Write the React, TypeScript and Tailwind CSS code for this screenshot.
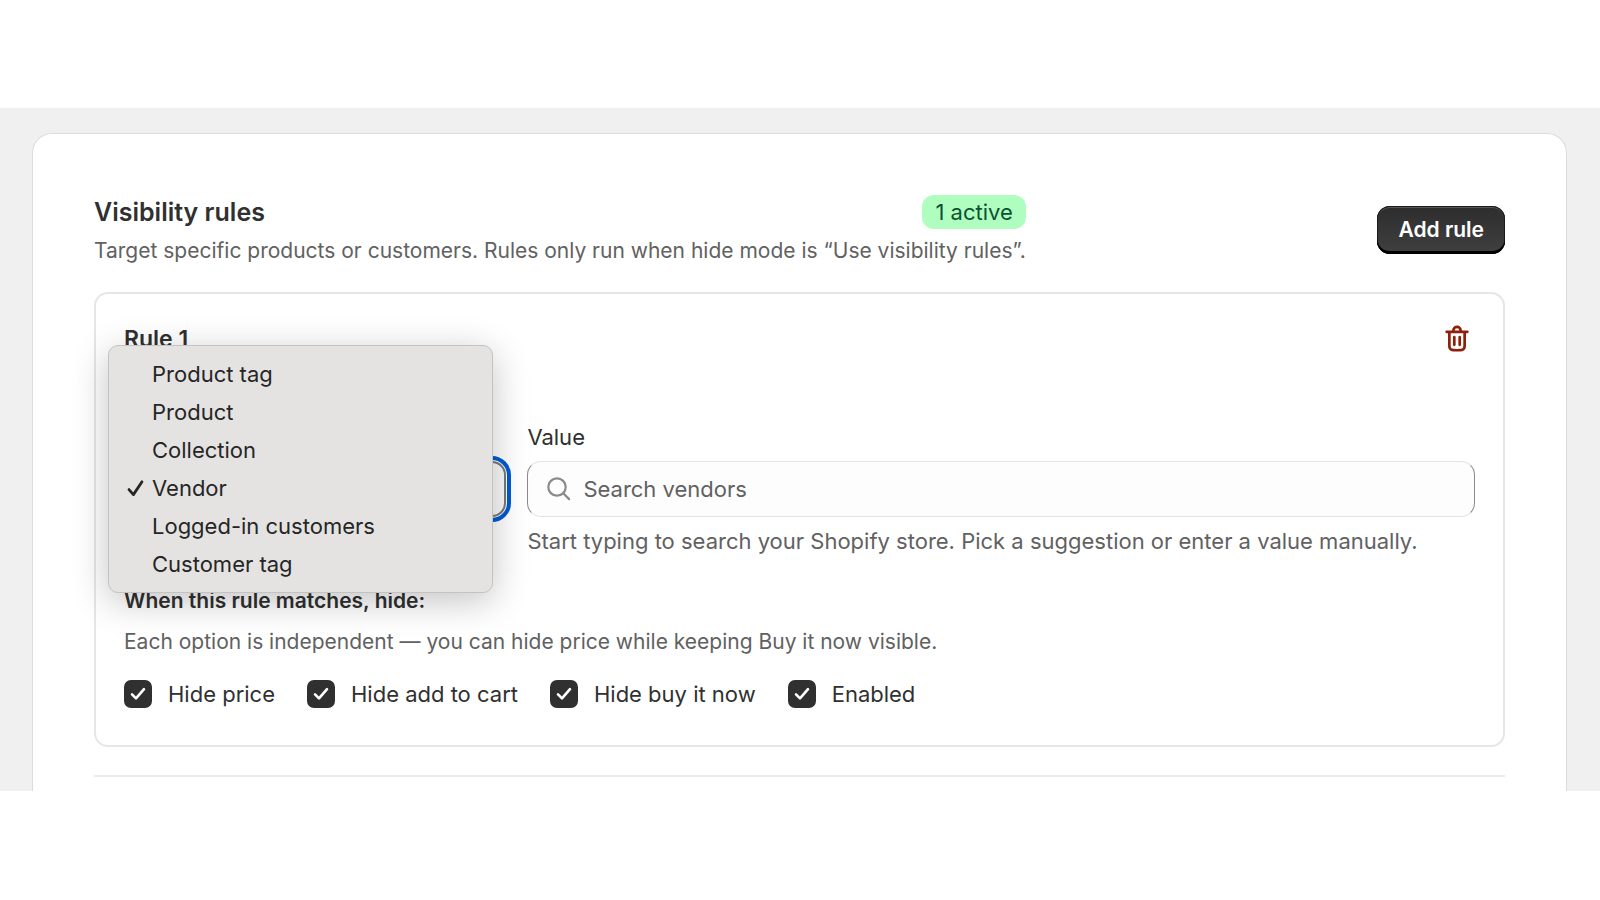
import { useState } from "react";

const ruleTypes = [
  "Product tag",
  "Product",
  "Collection",
  "Vendor",
  "Logged-in customers",
  "Customer tag",
];

const hideOptions = [
  { id: "hide-price", label: "Hide price" },
  { id: "hide-add-to-cart", label: "Hide add to cart" },
  { id: "hide-buy-it-now", label: "Hide buy it now" },
  { id: "enabled", label: "Enabled" },
];

function TrashIcon() {
  return (
    <svg viewBox="0 0 20 20" className="size-9" fill="currentColor" aria-hidden="true">
      <path d="M11.5 8.25a.75.75 0 0 1 .75.75v4.25a.75.75 0 0 1-1.5 0v-4.25a.75.75 0 0 1 .75-.75Z" />
      <path d="M9.25 9a.75.75 0 0 0-1.5 0v4.25a.75.75 0 0 0 1.5 0v-4.25Z" />
      <path
        fillRule="evenodd"
        d="M7.25 5.25a2.75 2.75 0 0 1 5.5 0h3a.75.75 0 0 1 0 1.5h-.75v5.45c0 1.68 0 2.52-.327 3.162a3 3 0 0 1-1.311 1.311c-.642.327-1.482.327-3.162.327h-.4c-1.68 0-2.52 0-3.162-.327a3 3 0 0 1-1.311-1.311c-.327-.642-.327-1.482-.327-3.162v-5.45h-.75a.75.75 0 0 1 0-1.5h3Zm1.5 0a1.25 1.25 0 1 1 2.5 0h-2.5Zm-2.25 1.5h7v5.45c0 .865-.001 1.423-.036 1.848-.033.408-.09.559-.128.633a1.5 1.5 0 0 1-.655.655c-.074.038-.225.095-.633.128-.425.035-.983.036-1.848.036h-.4c-.865 0-1.423-.001-1.848-.036-.408-.033-.559-.09-.633-.128a1.5 1.5 0 0 1-.656-.655c-.037-.074-.094-.225-.127-.633-.035-.425-.036-.983-.036-1.848v-5.45Z"
      />
    </svg>
  );
}

function SearchIcon() {
  return (
    <svg
      viewBox="0 0 24 24"
      className="size-6 shrink-0 text-[#8a8a8a]"
      fill="none"
      stroke="currentColor"
      strokeWidth="2.2"
      strokeLinecap="round"
      aria-hidden="true"
    >
      <circle cx="10" cy="10" r="8.7" />
      <path d="m16.5 16.5 5.6 5.6" />
    </svg>
  );
}

function RuleTypeMenu({ value, onSelect }: { value: string; onSelect: (type: string) => void }) {
  return (
    <ul
      role="listbox"
      aria-label="Rule type"
      className="absolute -top-[116px] -left-4 right-[13px] z-10 rounded-[10px] border border-[#c4c3c2] bg-[#e4e3e2] py-[9px] text-[#262626] shadow-[0_8px_36px_rgba(0,0,0,0.24)]"
    >
      {ruleTypes.map((type) => (
        <li
          key={type}
          role="option"
          aria-selected={type === value}
          onClick={() => onSelect(type)}
          className="flex h-[38px] items-center pl-[17px] text-[22px]"
        >
          <span className="flex w-[26px] shrink-0">
            {type === value && (
              <svg
                viewBox="0 0 18 18"
                className="size-[18px]"
                fill="none"
                stroke="currentColor"
                strokeWidth="2.8"
                strokeLinecap="round"
                strokeLinejoin="round"
                aria-hidden="true"
              >
                <path d="m3 10.6 4.4 5L16 2.8" />
              </svg>
            )}
          </span>
          {type}
        </li>
      ))}
    </ul>
  );
}

function Checkbox({ id, label }: { id: string; label: string }) {
  return (
    <label htmlFor={id} className="flex items-center gap-4 text-[22px] leading-7">
      <span className="grid size-7 place-items-center">
        <input
          id={id}
          type="checkbox"
          defaultChecked
          className="peer col-start-1 row-start-1 size-7 appearance-none rounded-[7px] border-2 border-[#303030] checked:bg-[#303030]"
        />
        <svg
          viewBox="0 0 28 28"
          className="pointer-events-none col-start-1 row-start-1 size-7 text-white opacity-0 peer-checked:opacity-100"
          fill="none"
          stroke="currentColor"
          strokeWidth="2.6"
          strokeLinecap="round"
          strokeLinejoin="round"
          aria-hidden="true"
        >
          <path d="m8 14.4 4 4 8-9.2" />
        </svg>
      </span>
      {label}
    </label>
  );
}

function RuleCard() {
  const [type, setType] = useState("Vendor");

  return (
    <section className="mt-[27px] rounded-[14px] border-2 border-[#e6e6e6] px-7 pt-[27px] pb-[37px]">
      <div className="flex items-center justify-between">
        <h3 className="text-[23px] leading-7 font-semibold">Rule 1</h3>
        <button type="button" aria-label="Delete rule" className="text-[#8e1f0b]">
          <TrashIcon />
        </button>
      </div>

      <div className="mt-[66px] grid grid-cols-[23fr_57fr] gap-[21px]">
        <div className="relative mt-[38px] self-start">
          <select
            aria-label="Rule type"
            value={type}
            onChange={(event) => setType(event.target.value)}
            className="block h-14 w-full appearance-none rounded-[14px] border-2 border-[#7a7a7a] bg-[#fafafa] px-4 text-[22px] outline-4 outline-offset-1 outline-[#005bd3]"
          >
            {ruleTypes.map((option) => (
              <option key={option}>{option}</option>
            ))}
          </select>
          <RuleTypeMenu value={type} onSelect={setType} />
        </div>

        <div>
          <label htmlFor="rule-value" className="block text-[22px] leading-7">
            Value
          </label>
          <div className="mt-[10px] flex h-14 items-center gap-3 rounded-[14px] border border-x-[#8a8a8a] border-y-[#e3e3e3] bg-[#fdfdfd] px-[19px]">
            <SearchIcon />
            <input
              id="rule-value"
              type="text"
              placeholder="Search vendors"
              className="min-w-0 flex-1 bg-transparent text-[22px] outline-none placeholder:text-[#616161]"
            />
          </div>
          <p className="mt-[10px] text-[22px] leading-7 text-[#616161]">
            Start typing to search your Shopify store. Pick a suggestion or enter a value manually.
          </p>
        </div>
      </div>

      <h4 className="mt-8 text-[21px] leading-7 font-semibold">When this rule matches, hide:</h4>
      <p className="mt-[13px] text-[21px] leading-7 text-[#616161]">
        Each option is independent — you can hide price while keeping Buy it now visible.
      </p>
      <div className="mt-6 flex flex-wrap gap-8">
        {hideOptions.map((option) => (
          <Checkbox key={option.id} id={option.id} label={option.label} />
        ))}
      </div>
    </section>
  );
}

export default function App() {
  return (
    <div className="min-h-screen bg-white py-[108px] font-['Inter',sans-serif] text-[#303030]">
      <main className="bg-[#f0f0f0] pt-[25px] pr-[33px] pl-8">
        <div className="rounded-t-[20px] border border-b-0 border-[#dcdcdc] bg-white px-[61px] pt-[61px] pb-[14px]">
          <header className="flex items-center justify-between">
            <div>
              <div className="flex items-center justify-between">
                <h2 className="text-[25px] leading-[34px] font-semibold">Visibility rules</h2>
                <span className="rounded-xl bg-[#affebf] px-[13px] text-[22px] leading-[34px] text-[#0c5132]">
                  1 active
                </span>
              </div>
              <p className="mt-2 text-[21px] leading-7 text-[#616161]">
                Target specific products or customers. Rules only run when hide mode is “Use
                visibility rules”.
              </p>
            </div>
            <button
              type="button"
              className="h-12 shrink-0 rounded-[13px] bg-linear-to-b from-[#2d2d2d] to-[#404040] px-[21px] text-[21px] font-semibold text-white shadow-[inset_0_-3px_0_#000,inset_0_0_0_1px_#1a1a1a,inset_0_2px_0_#555]"
            >
              Add rule
            </button>
          </header>

          <RuleCard />

          <hr className="mt-7 border-t-2 border-[#ebebeb]" />
        </div>
      </main>
    </div>
  );
}
